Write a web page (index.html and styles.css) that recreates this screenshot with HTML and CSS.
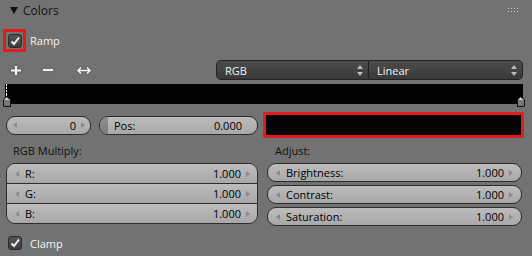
FILE: index.html
```html
<!DOCTYPE html>
<html>
<head>
<meta charset="utf-8">
<link rel="stylesheet" href="styles.css">
</head>
<body>
<div class="panel">
  <div class="header">
    <svg class="tri" width="8" height="7" viewBox="0 0 8 7"><polygon points="0,0 8,0 4,7" fill="#111"/></svg>
    <span class="title">Colors</span>
    <svg class="grip" width="11" height="5" viewBox="0 0 11 5">
      <g fill="#c8c8c8"><rect x="0" y="0" width="1" height="1"/><rect x="3" y="0" width="1" height="1"/><rect x="6" y="0" width="1" height="1"/><rect x="9" y="0" width="1" height="1"/><rect x="0" y="3" width="1" height="1"/><rect x="3" y="3" width="1" height="1"/><rect x="6" y="3" width="1" height="1"/><rect x="9" y="3" width="1" height="1"/></g>
    </svg>
  </div>

  <div class="ramp-row">
    <div class="hl"><div class="check"><svg width="12" height="12" viewBox="0 0 12 12"><path d="M2.5 6.5 L5 9 L10 2.5" fill="none" stroke="#f2f2f2" stroke-width="2"/></svg></div></div>
    <span class="cb-label">Ramp</span>
  </div>

  <div class="tools">
    <svg class="ico plus" width="12" height="11" viewBox="0 0 12 11"><path d="M1 5.5 H11 M6 1 V10" stroke="#f4f4f4" stroke-width="2.2"/></svg>
    <svg class="ico minus" width="12" height="4" viewBox="0 0 12 4"><path d="M1 2 H11" stroke="#f4f4f4" stroke-width="2.2"/></svg>
    <svg class="ico swap" width="16" height="9" viewBox="0 0 16 9"><path d="M2 4.5 H14 M5 1.5 L2 4.5 L5 7.5 M11 1.5 L14 4.5 L11 7.5" fill="none" stroke="#f4f4f4" stroke-width="1.6"/></svg>
    <div class="menus">
      <div class="menu left"><span>RGB</span><svg class="updown" width="6" height="11" viewBox="0 0 6 11"><polygon points="3,0 6,4 0,4" fill="#bbb"/><polygon points="0,7 6,7 3,11" fill="#bbb"/></svg></div>
      <div class="menu right"><span>Linear</span><svg class="updown" width="6" height="11" viewBox="0 0 6 11"><polygon points="3,0 6,4 0,4" fill="#bbb"/><polygon points="0,7 6,7 3,11" fill="#bbb"/></svg></div>
    </div>
  </div>

  <div class="ramp">
    <div class="bar"></div>
    <div class="stop first"><svg width="8" height="12" viewBox="0 0 8 12"><line x1="3.5" y1="0" x2="3.5" y2="1" stroke="#fff"/><path d="M0.5 11.5 V4.5 L3.5 1.5 L7.5 4.5 V11.5 Z" fill="#777" stroke="#111"/><path d="M1.5 4.8 L3.5 2.8 L6.5 4.8 Z" fill="#eee"/></svg></div>
    <div class="stop last"><svg width="8" height="12" viewBox="0 0 8 12"><path d="M0.5 11.5 V4.5 L3.5 1.5 L7.5 4.5 V11.5 Z" fill="#777" stroke="#111"/><path d="M1.5 4.8 L3.5 2.8 L6.5 4.8 Z" fill="#eee"/></svg></div>
    <div class="dash"></div>
  </div>

  <div class="row5">
    <div class="num idx"><i class="al"></i><span class="val">0</span><i class="ar"></i></div>
    <div class="num pos"><span class="fill"></span><span class="lbl">Pos:</span><span class="val">0.000</span></div>
    <div class="color-hl"><div class="swatch"></div></div>
  </div>

  <div class="cols">
    <div class="col">
      <div class="clabel">RGB Multiply:</div>
      <div class="group">
        <div class="gfield"><i class="al"></i><span class="lbl">R:</span><span class="val">1.000</span><i class="ar"></i></div>
        <div class="gfield"><i class="al"></i><span class="lbl">G:</span><span class="val">1.000</span><i class="ar"></i></div>
        <div class="gfield"><i class="al"></i><span class="lbl">B:</span><span class="val">1.000</span><i class="ar"></i></div>
      </div>
    </div>
    <div class="col rcol">
      <div class="clabel">Adjust:</div>
      <div class="stack">
        <div class="num"><i class="al"></i><span class="lbl">Brightness:</span><span class="val">1.000</span><i class="ar"></i></div>
        <div class="num"><i class="al"></i><span class="lbl">Contrast:</span><span class="val">1.000</span><i class="ar"></i></div>
        <div class="num"><i class="al"></i><span class="lbl">Saturation:</span><span class="val">1.000</span><i class="ar"></i></div>
      </div>
    </div>
  </div>

  <div class="clamp-row">
    <div class="check"><svg width="12" height="12" viewBox="0 0 12 12"><path d="M2.5 6.5 L5 9 L10 2.5" fill="none" stroke="#f2f2f2" stroke-width="2"/></svg></div>
    <span class="cb-label">Clamp</span>
  </div>
</div>
</body>
</html>
```

FILE: styles.css
```css
html, body {
  margin: 0;
  padding: 0;
}
body {
  background: #727272;
  font-family: "Open Sans", "Noto Sans", sans-serif;
  font-size: 11px;
  color: #000;
  width: 532px;
  height: 256px;
  overflow: hidden;
}
.panel {
  display: flex;
  flex-direction: column;
}
.header {
  height: 20px;
  display: flex;
  align-items: center;
  padding-left: 10px;
  padding-right: 13px;
}
.tri { margin-right: 5px; margin-top: 1px; }
.title { font-size: 12px; color: #111; }
.grip { margin-left: auto; }

.ramp-row {
  margin-top: 9px;
  height: 23px;
  display: flex;
  align-items: center;
  padding-left: 3px;
}
.hl {
  width: 23px;
  height: 23px;
  box-sizing: border-box;
  border: 3px solid #e41b1b;
  display: flex;
  align-items: center;
  justify-content: center;
}
.check {
  width: 14px;
  height: 14px;
  box-sizing: border-box;
  border: 1px solid #2a2a2a;
  border-radius: 3px;
  background: linear-gradient(#555, #3e3e3e);
  display: flex;
  align-items: center;
  justify-content: center;
}
.cb-label {
  color: #f2f2f2;
  margin-left: 4px;
}

.tools {
  margin-top: 8px;
  height: 20px;
  display: flex;
  align-items: center;
}
.ico { filter: drop-shadow(0 0 1px rgba(0,0,0,0.35)); }
.plus { margin-left: 10px; }
.minus { margin-left: 20px; }
.swap { margin-left: 22px; }
.menus {
  margin-left: 124px;
  display: flex;
  height: 20px;
}
.menu {
  height: 20px;
  box-sizing: border-box;
  border: 1px solid #222;
  background: linear-gradient(#4c4c4c, #393939);
  color: #f4f4f4;
  display: flex;
  align-items: center;
  padding: 0 5px 0 8px;
}
.menu .updown { margin-left: auto; }
.menu.left {
  width: 153px;
  border-radius: 5px 0 0 5px;
}
.menu.right {
  width: 154px;
  border-left: none;
  border-radius: 0 5px 5px 0;
}

.ramp {
  position: relative;
  margin-top: 4px;
  height: 24px;
  padding-left: 5px;
}
.bar {
  width: 518px;
  height: 20px;
  background: #020202;
}
.stop { position: absolute; top: 11px; }
.stop.first { left: 3px; }
.stop.last { left: 517px; }
.dash {
  position: absolute;
  left: 6px;
  top: 0;
  height: 12px;
  width: 1px;
  background: repeating-linear-gradient(#fff 0 2px, transparent 2px 3px);
}

.row5 {
  margin-top: 4px;
  height: 26px;
  display: flex;
  align-items: center;
  padding-left: 6px;
}
.num {
  position: relative;
  height: 19px;
  box-sizing: border-box;
  border: 1px solid #2c2c2c;
  border-radius: 9px;
  background: linear-gradient(#bcbcbc, #a8a8a8);
  display: flex;
  align-items: center;
  padding: 0 8px 0 8px;
  overflow: hidden;
}
.num .val { margin-left: auto; }
.al, .ar {
  width: 0;
  height: 0;
  border-top: 3px solid transparent;
  border-bottom: 3px solid transparent;
  flex: none;
}
.al { border-right: 4px solid #8a8a8a; margin-right: 6px; }
.ar { border-left: 4px solid #8a8a8a; margin-left: 5px; }
.idx { width: 85px; padding-left: 6px; padding-right: 5px; }
.pos { width: 159px; margin-left: 8px; padding-left: 14px; padding-right: 15px; }
.pos .fill {
  position: absolute;
  left: 0;
  top: 0;
  bottom: 0;
  width: 8px;
  background: linear-gradient(#8e8e8e, #7c7c7c);
}
.pos .lbl { position: relative; }
.color-hl {
  margin-left: 5px;
  width: 261px;
  height: 26px;
  box-sizing: border-box;
  border: 3px solid #e41b1b;
  border-radius: 2px;
  background: #050505;
}

.cols {
  display: flex;
  padding-left: 6px;
  margin-top: 5px;
}
.col { width: 252px; display: flex; flex-direction: column; }
.rcol { margin-left: 9px; width: 255px; }
.clabel {
  height: 20px;
  line-height: 16px;
  padding-left: 7px;
  color: #111;
}
.rcol .clabel { padding-left: 8px; }
.group {
  border: 1px solid #2c2c2c;
  border-radius: 9px;
  overflow: hidden;
  display: flex;
  flex-direction: column;
}
.gfield {
  height: 19px;
  background: linear-gradient(#bcbcbc, #a8a8a8);
  display: flex;
  align-items: center;
  padding: 0 7px 0 8px;
}
.gfield + .gfield { border-top: 1px solid #2c2c2c; }
.gfield .val { margin-left: auto; }
.stack {
  display: flex;
  flex-direction: column;
  gap: 3px;
}

.clamp-row {
  margin-top: 9px;
  height: 16px;
  display: flex;
  align-items: center;
  padding-left: 8px;
}
.clamp-row .cb-label { margin-left: 8px; }
```
